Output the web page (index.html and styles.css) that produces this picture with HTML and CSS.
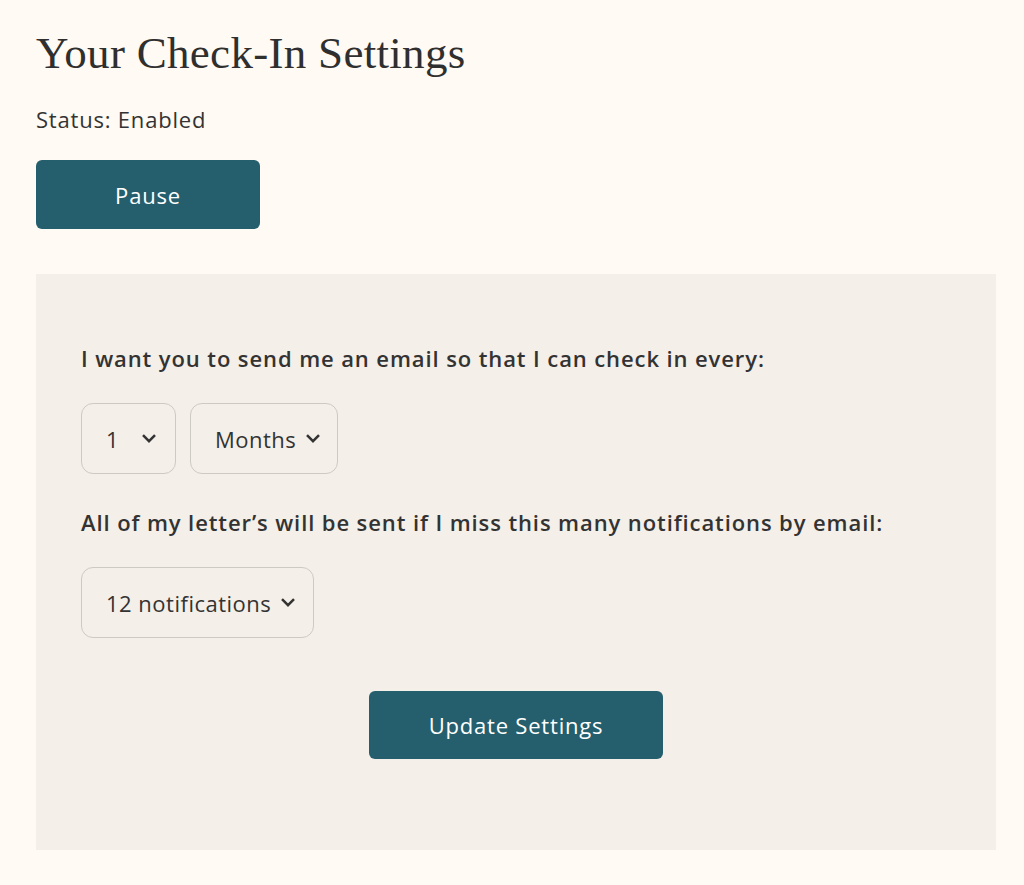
FILE: index.html
```html
<!DOCTYPE html>
<html lang="en">
	<head>
		<meta charset="UTF-8" />
		<meta name="viewport" content="width=device-width, initial-scale=1.0" />
		<title>Check-In Settings</title>
		<link rel="stylesheet" href="styles.css">
	</head>
	<body>
		<div class="page">
			<h1 class="title">Your Check-In Settings</h1>
			<p class="status">Status: Enabled</p>
			<a href="javascript:;" class="btn btn-pause">Pause</a>

			<div class="panel">
				<p class="label">I want you to send me an email so that I can check in every:</p>
				<div class="row">
					<div class="select select-num">
						<span>1</span>
						<svg class="chev" viewBox="0 0 12 8"><path d="M1.5 1.5 6 6 10.5 1.5" /></svg>
					</div>
					<div class="select select-unit">
						<span>Months</span>
						<svg class="chev" viewBox="0 0 12 8"><path d="M1.5 1.5 6 6 10.5 1.5" /></svg>
					</div>
				</div>

				<p class="label">All of my letter’s will be sent if I miss this many notifications by email:</p>
				<div class="row">
					<div class="select select-count">
						<span>12 notifications</span>
						<svg class="chev" viewBox="0 0 12 8"><path d="M1.5 1.5 6 6 10.5 1.5" /></svg>
					</div>
				</div>

				<div class="actions">
					<a href="javascript:;" class="btn btn-update">Update Settings</a>
				</div>
			</div>
		</div>
	</body>
</html>
```

FILE: styles.css
```css
* {
	margin: 0;
	padding: 0;
	box-sizing: border-box;
}

body {
	background-color: #fffaf3;
	color: #333;
	font-family: "Open Sans", Lato, sans-serif;
	letter-spacing: 0.8px;
}

.page {
	padding: 26px 28px 0 36px;
}

.title {
	font-family: "Liberation Serif", serif;
	font-weight: normal;
	font-size: 45px;
	line-height: 54px;
	letter-spacing: 0.3px;
	color: #2f2f2f;
}

.status {
	margin-top: 25px;
	font-size: 22px;
	line-height: 28px;
}

.btn {
	display: flex;
	align-items: center;
	justify-content: center;
	background-color: #255f6e;
	color: #fff;
	text-decoration: none;
	font-size: 22px;
	border-radius: 6px;
}

.btn-pause {
	margin-top: 27px;
	width: 224px;
	height: 69px;
}

.panel {
	margin-top: 45px;
	width: 960px;
	background-color: #f4efe9;
	padding: 70px 45px 91px;
}

.label {
	font-size: 22px;
	font-weight: 600;
	line-height: 28px;
	letter-spacing: 0.9px;
}

.row {
	display: flex;
	gap: 14px;
	margin-top: 31px;
	margin-bottom: 34px;
}

.select {
	height: 71px;
	border: 1px solid #cdc9c3;
	border-radius: 12px;
	display: flex;
	align-items: center;
	font-size: 22px;
	letter-spacing: 0.5px;
	padding-left: 24px;
}

.select-num {
	width: 95px;
	gap: 22px;
}

.select-unit {
	width: 148px;
	gap: 9px;
}

.select-count {
	width: 233px;
	gap: 9px;
}

.chev {
	width: 16px;
	height: 11px;
	fill: none;
	stroke: #333;
	stroke-width: 1.9;
}

.actions {
	display: flex;
	justify-content: center;
	margin-top: 53px;
}

.btn-update {
	width: 294px;
	height: 68px;
}
```
